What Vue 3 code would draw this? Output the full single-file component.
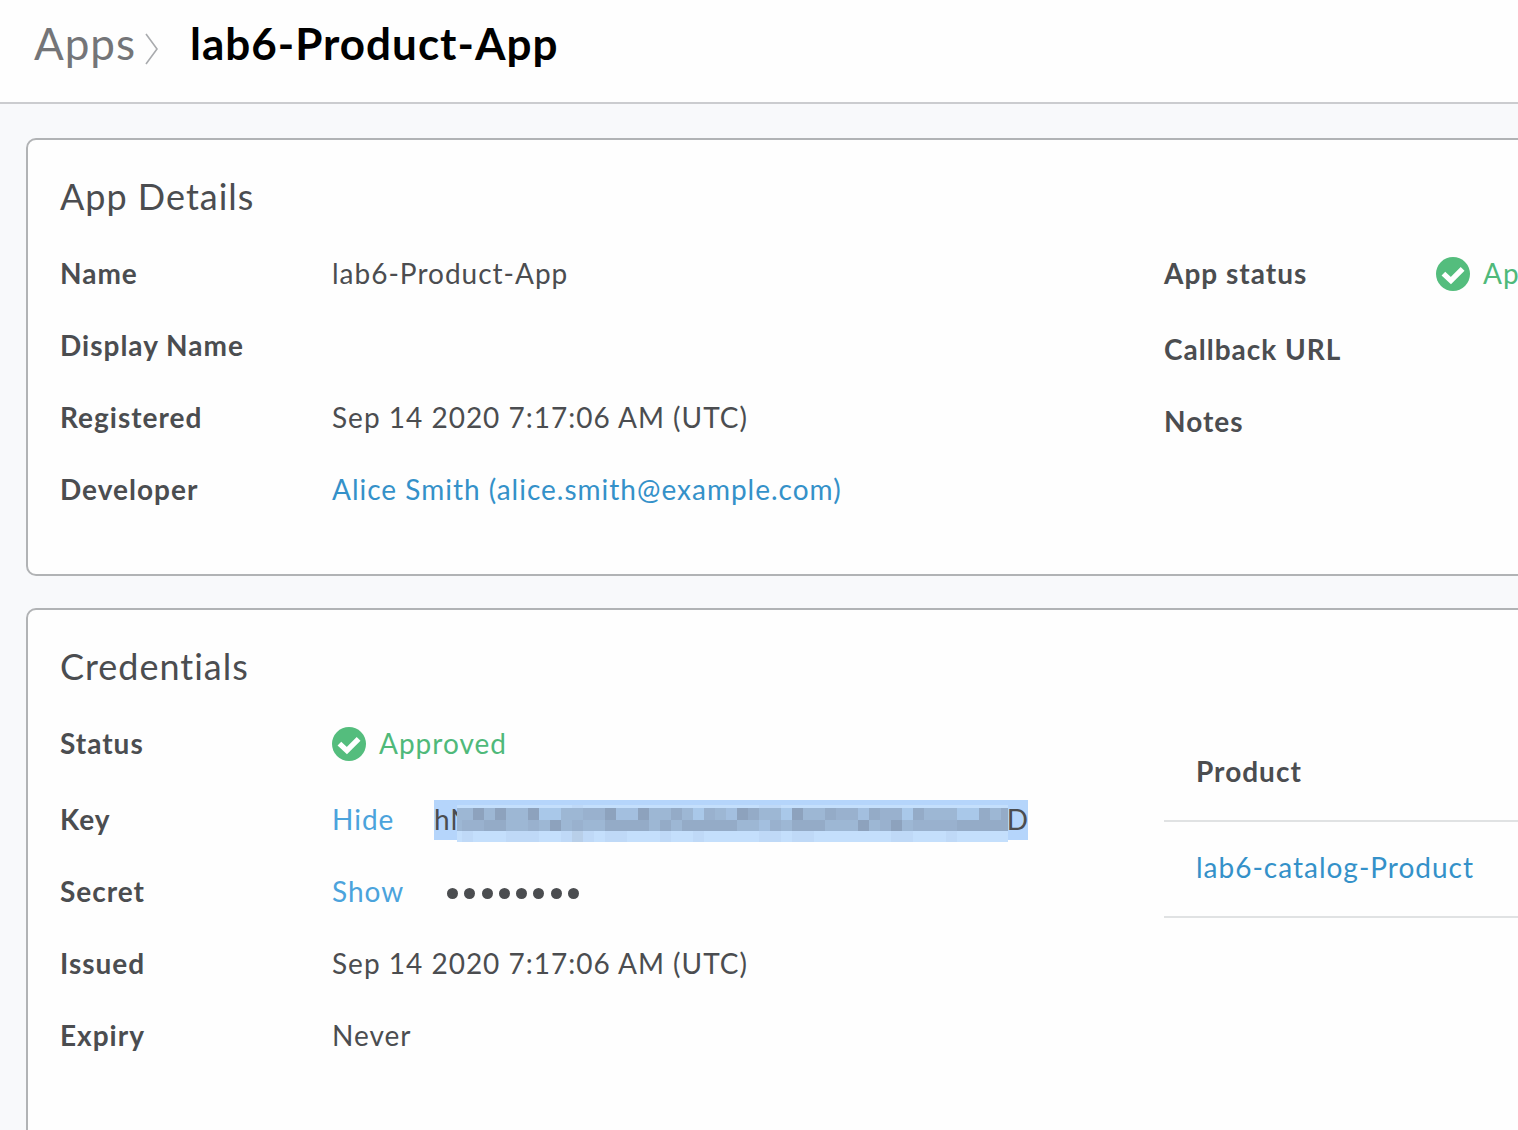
<script setup>
const details = [
  { label: 'Name', value: 'lab6-Product-App' },
  { label: 'Display Name', value: '' },
  { label: 'Registered', value: 'Sep 14 2020 7:17:06 AM (UTC)' },
  { label: 'Developer', value: 'Alice Smith (alice.smith@example.com)', link: true },
]

// Shade per mosaic cell, one letter per column
const palette = {
  L: '#a9c8e9', l: '#a3bfdf', m: '#9db7d4', n: '#99b1ce', d: '#94abc7', D: '#8da2bd',
  a: '#c4dffc', b: '#bfd9f7', c: '#b8cfe9',
}
const mosaic = [
  'aaaaaaaaaaabaaaaaaaaaaaaaaaabbaaaaaaaaaaaaaaaaaaaaa',
  'mmDmDmmDLLmmnnDllDmmdmLnmlDdmmLDmmdnnldnnLdmmmLLdmd',
  'mnnddmmnmDmnmmddddmdmdddddmmlnmdddmmmDmnDmnnnnddddd',
  'abaaabbbaabcbabbaaabaabaaaaabbabbaaaaaaabbaaabaaaaa',
].map((row) => [...row].map((k) => palette[k]))
</script>

<template>
  <div class="page">
    <header class="topbar">
      <span class="crumb">Apps</span>
      <svg class="chevron" width="16" height="34" viewBox="0 0 16 34">
        <path d="M2 2 L13 17 L2 32" fill="none" stroke="#a9abae" stroke-width="1.6" />
      </svg>
      <h1>lab6-Product-App</h1>
    </header>

    <section class="card details">
      <h2>App Details</h2>
      <div class="columns">
        <div class="left">
          <div v-for="row in details" :key="row.label" class="row">
            <b>{{ row.label }}</b>
            <a v-if="row.link" class="link">{{ row.value }}</a>
            <span v-else>{{ row.value }}</span>
          </div>
        </div>
        <div class="right">
          <div class="row status">
            <b>App status</b>
            <svg class="check" width="34" height="34" viewBox="0 0 34 34">
              <circle cx="17" cy="17" r="17" fill="#54bd7d" />
              <path d="M7.4 16.6 L14.9 23.6 L26.6 11.9" fill="none" stroke="#fff" stroke-width="5.4" />
            </svg>
            <span class="ok">Approved</span>
          </div>
          <div class="row"><b>Callback URL</b></div>
          <div class="row"><b>Notes</b></div>
        </div>
      </div>
    </section>

    <section class="card credentials">
      <h2>Credentials</h2>
      <div class="columns">
        <div class="left">
          <div class="row status">
            <b>Status</b>
            <svg class="check" width="34" height="34" viewBox="0 0 34 34">
              <circle cx="17" cy="17" r="17" fill="#54bd7d" />
              <path d="M7.4 16.6 L14.9 23.6 L26.6 11.9" fill="none" stroke="#fff" stroke-width="5.4" />
            </svg>
            <span class="ok">Approved</span>
          </div>
          <div class="row">
            <b>Key</b>
            <a class="action key-action">Hide</a>
            <span class="key">
              <span>hN</span><span class="key-end">D</span>
              <span class="mosaic">
                <span v-for="(cells, r) in mosaic" :key="r" class="strip">
                  <i v-for="(color, c) in cells" :key="c" :style="{ background: color }"></i>
                </span>
              </span>
            </span>
          </div>
          <div class="row">
            <b>Secret</b>
            <a class="action secret-action">Show</a>
            <span class="dots"><i v-for="n in 8" :key="n"></i></span>
          </div>
          <div class="row"><b>Issued</b><span>Sep 14 2020 7:17:06 AM (UTC)</span></div>
          <div class="row"><b>Expiry</b><span>Never</span></div>
        </div>
        <div class="right products">
          <div class="cell head">Product</div>
          <div class="cell"><a class="link">lab6-catalog-Product</a></div>
        </div>
      </div>
    </section>
  </div>
</template>

<style>
body {
  margin: 0;
  overflow: hidden;
}
</style>

<style scoped>
.page {
  width: 1518px;
  height: 1130px;
  overflow: hidden;
  background: #f8f9fb;
  font-family: Lato, sans-serif;
  font-size: 28px;
  letter-spacing: 1px;
  color: #4b4d50;
  white-space: nowrap;
  font-variant-ligatures: none;
}
.topbar {
  display: flex;
  height: 102px;
  padding-left: 34px;
  background: #fefefe;
  border-bottom: 2px solid #cbcccf;
  font-size: 44px;
  line-height: 86px;
}
.crumb {
  width: 110px;
  color: #747578;
}
.chevron {
  margin-top: 32px;
}
h1 {
  margin: 0 0 0 30px;
  font-size: 44px;
  font-weight: 700;
  color: #000;
  letter-spacing: 1px;
}
.card {
  box-sizing: border-box;
  width: 1600px;
  margin-left: 26px;
  padding: 34px 0 0 32px;
  background: #fefefe;
  border: 2px solid #b1b3b5;
  border-radius: 10px;
}
.details {
  height: 438px;
  margin-top: 34px;
}
.credentials {
  height: 700px;
  margin-top: 32px;
}
h2 {
  margin: 0 0 20px;
  font-size: 36px;
  font-weight: 400;
  line-height: 44px;
}
.columns {
  display: flex;
}
.left {
  width: 1104px;
}
.row {
  display: flex;
  height: 72px;
  line-height: 70px;
}
.row.status {
  height: 76px;
}
.row b {
  flex: none;
  width: 272px;
  font-weight: 700;
}
.check {
  flex: none;
  margin: 19px 13px 0 0;
}
.ok {
  color: #4fb97a;
}
.link {
  color: #3491c9;
}
.action {
  color: #4ba3dc;
}
.key-action {
  width: 102px;
}
.secret-action {
  width: 115px;
}
.key {
  position: relative;
  display: flex;
  justify-content: space-between;
  width: 594px;
  height: 40px;
  margin-top: 16px;
  line-height: 38px;
  background: #b5d5fb;
}
.key-end {
  margin-right: -1px;
}
.mosaic {
  position: absolute;
  left: 23px;
  top: 5px;
  width: 551px;
}
.strip {
  display: flex;
  height: 11px;
}
.strip:first-child {
  height: 3px;
}
.strip:nth-child(2) {
  height: 12px;
}
.strip i {
  flex: none;
  width: 11px;
}
.strip i:first-child {
  width: 5px;
}
.strip i:last-child {
  width: 7px;
}
.dots {
  display: flex;
  align-items: center;
  gap: 6.3px;
  padding-top: 2px;
}
.dots i {
  width: 11px;
  height: 11px;
  border-radius: 50%;
  background: #4b4d50;
}
.products {
  width: 460px;
  padding-top: 18px;
}
.cell {
  height: 94px;
  padding-left: 32px;
  line-height: 90px;
  border-bottom: 2px solid #e0e2e3;
}
.head {
  font-weight: 700;
}
</style>
